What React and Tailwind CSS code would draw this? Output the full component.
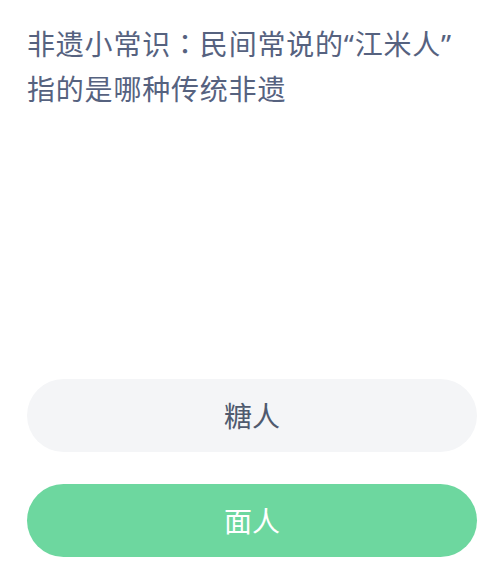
import React from "react";

const options = [
    { label: "糖人", correct: false },
    { label: "面人", correct: true },
];

const App = () => {
    return (
        <div
            className="w-[504px] h-[578px] bg-white overflow-hidden"
            style={{ fontFamily: '"Noto Sans", "Noto Sans CJK SC", sans-serif' }}
        >
            <div className="px-[27px] pt-[21px]">
                <h1 className="text-[28px] leading-[45px] tracking-[0.8px] text-[#56627f] font-normal">
                    非遗小常识
                    <span style={{ fontFamily: '"Noto Sans CJK TC", sans-serif' }}>：</span>
                    民间常说的“江米人”
                    <br />
                    指的是哪种传统非遗
                </h1>
            </div>

            <div className="mt-[267px] px-[27px] flex flex-col gap-[32px]">
                {options.map((opt) => (
                    <button
                        key={opt.label}
                        className={`h-[73px] w-full rounded-full flex items-center justify-center text-[28px] ${
                            opt.correct
                                ? "bg-[#6dd79f] text-white"
                                : "bg-[#f4f5f7] text-[#4f5a6e]"
                        }`}
                    >
                        {opt.label}
                    </button>
                ))}
            </div>
        </div>
    );
};

export default App;
